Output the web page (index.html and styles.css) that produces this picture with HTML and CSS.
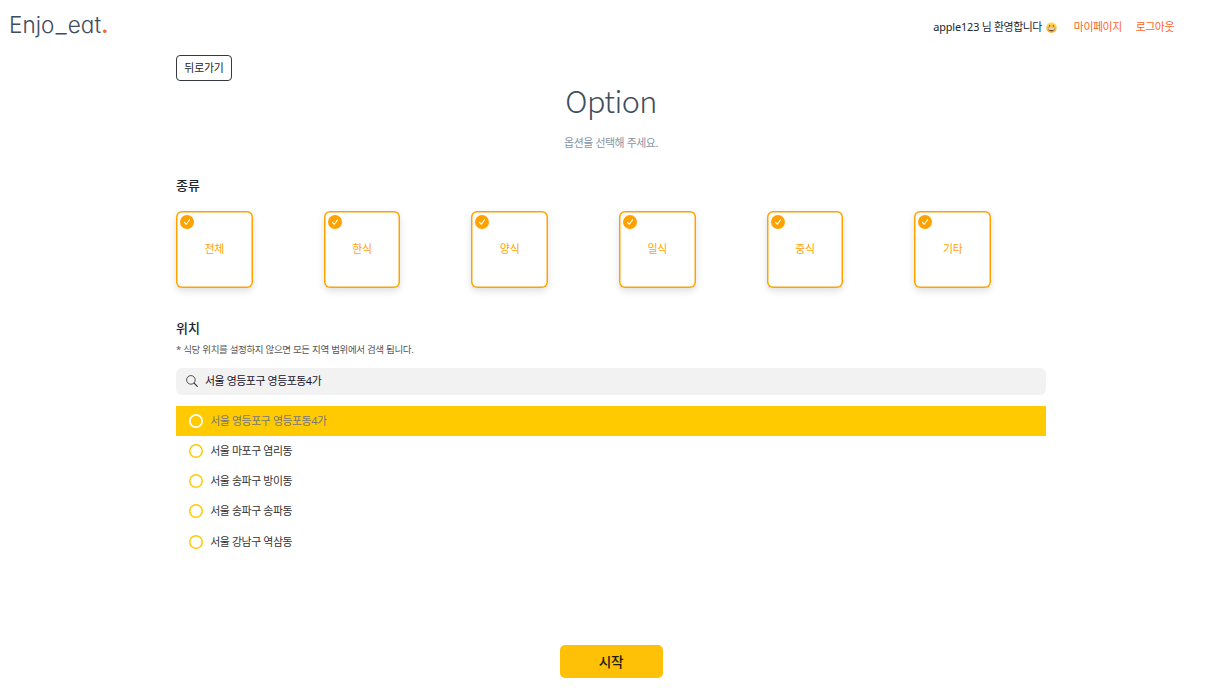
FILE: index.html
```html
<!DOCTYPE html>
<html lang="ko">
<head>
<meta charset="utf-8">
<title>Enjo_eat.</title>
<link rel="stylesheet" href="styles.css">
</head>
<body>
<svg width="0" height="0" class="defs" aria-hidden="true">
  <symbol id="check" viewBox="0 0 14 14"><circle cx="7" cy="7" r="7" fill="#ffa200"/><path d="M4.5 7.4 6.3 9.3 9.5 4.9" fill="none" stroke="#fff" stroke-width="1.05" stroke-linecap="round" stroke-linejoin="round"/></symbol>
</svg>
<header class="header">
  <a class="logo"><span class="logo-text">Enjo<span class="underscore">_</span>eat<span class="dot">.</span></span></a>
  <nav class="nav">
    <span class="welcome"><span class="user">apple123</span> 님 환영합니다</span>
    <svg class="emoji" viewBox="0 0 22 22"><defs><linearGradient id="face" x2="0" y2="1"><stop stop-color="#ffe45c"/><stop offset="1" stop-color="#f5a51c"/></linearGradient></defs><circle cx="11" cy="11" r="10.5" fill="url(#face)"/><ellipse cx="7.4" cy="7.7" rx="1.2" ry="2" fill="#7a5020"/><ellipse cx="14.6" cy="7.7" rx="1.2" ry="2" fill="#7a5020"/><path d="M4 11.5Q11 13 18 11.5 17.2 18.3 11 18.3 4.8 18.3 4 11.5Z" fill="#80461a"/><path d="M4.6 12Q11 13.3 17.4 12L16.3 15Q11 16 5.7 15Z" fill="#fff"/></svg>
    <a class="link mypage">마이페이지</a>
    <a class="link logout">로그아웃</a>
  </nav>
</header>
<main class="main">
  <button class="back">뒤로가기</button>
  <h1 class="title">Option</h1>
  <p class="subtitle">옵션을 선택해 주세요.</p>
  <h2 class="heading">종류</h2>
  <div class="cards">
    <div class="card"><svg class="check"><use href="#check"/></svg>전체</div>
    <div class="card"><svg class="check"><use href="#check"/></svg>한식</div>
    <div class="card"><svg class="check"><use href="#check"/></svg>양식</div>
    <div class="card"><svg class="check"><use href="#check"/></svg>일식</div>
    <div class="card"><svg class="check"><use href="#check"/></svg>중식</div>
    <div class="card"><svg class="check"><use href="#check"/></svg>기타</div>
  </div>
  <h2 class="heading location">위치</h2>
  <p class="note">* 식당 위치를 설정하지 않으면 모든 지역 범위에서 검색 됩니다.</p>
  <div class="search">
    <svg class="search-icon" viewBox="0 0 12 12"><circle cx="4.9" cy="4.9" r="4.3" fill="none" stroke="#333" stroke-width=".85"/><path d="M8.1 8.1 11.3 11.3" stroke="#333" stroke-width="1.2" stroke-linecap="round"/></svg>
    <span>서울 영등포구 영등포동4가</span>
  </div>
  <ul class="list">
    <li class="item selected"><span class="radio"></span><span>서울 영등포구 영등포동4가</span></li>
    <li class="item"><span class="radio"></span><span>서울 마포구 염리동</span></li>
    <li class="item"><span class="radio"></span><span>서울 송파구 방이동</span></li>
    <li class="item"><span class="radio"></span><span>서울 송파구 송파동</span></li>
    <li class="item"><span class="radio"></span><span>서울 강남구 역삼동</span></li>
  </ul>
  <button class="start">시작</button>
</main>
</body>
</html>
```
FILE: styles.css
```css
* { box-sizing: border-box; }
body { margin: 0; height: 688px; overflow: hidden; background: #fff; color: #212529; font: 400 10.9px/16px "Noto Sans", "Noto Sans CJK KR", sans-serif; letter-spacing: -.45px; word-spacing: .2px; }
h1, h2, p, ul { margin: 0; padding: 0; font-weight: 400; }
button { font: inherit; padding: 0; letter-spacing: -.2px; }
.defs { display: block; height: 0; }
.header { display: flex; justify-content: space-between; height: 55px; padding: 7px 46px 0 9px; }
.logo { height: 34px; padding-top: 1px; color: #3d4d5c; }
.logo-text { font: 300 22.5px/34px Inter, sans-serif; font-feature-settings: "cv11"; letter-spacing: .05px; white-space: nowrap; }
.underscore { margin: 0 1px; font-size: 25px; line-height: 1; }
.dot { color: #ff6426; font-weight: 600; }
.nav { display: flex; align-items: center; height: 40px; white-space: nowrap; }
.user { letter-spacing: -.15px; }
.emoji { width: 11px; height: 11px; margin-left: 4px; }
.link { color: #ff6426; }
.mypage { margin-left: 17px; }
.logout { margin-left: 14px; }
.main { display: flex; flex-direction: column; width: 870px; margin-left: 176px; }
.back { width: 56px; height: 26px; border: 1px solid #343a40; border-radius: 4px; background: #fff; color: #212529; }
.title { height: 46px; margin-top: -4px; text-align: center; color: #3d4d5c; font: 300 30.5px/46px "Noto Sans CJK KR", sans-serif; letter-spacing: -.6px; }
.subtitle { margin-top: 12px; text-align: center; color: #8495a8; }
.heading { height: 20px; margin-top: 24px; font-size: 13px; line-height: 20px; font-weight: 500; letter-spacing: 0; }
.cards { display: grid; grid-template-columns: repeat(6, 147.7px); margin-top: 15.5px; }
.card { position: relative; display: flex; align-items: center; justify-content: center; width: 76.6px; height: 77px; border-radius: 6px; color: #ffa200; letter-spacing: -.2px; box-shadow: inset 0 0 0 1.5px #ffa200, 0 3px 7px rgba(0, 0, 0, .13); }
.check { position: absolute; top: 4px; left: 4px; width: 14px; height: 14px; }
.location { margin-top: 30.5px; }
.note { margin-top: 4px; color: #555; font-size: 9.5px; letter-spacing: -.36px; }
.search { display: flex; align-items: center; gap: 7px; height: 27.5px; margin-top: 9.5px; padding-left: 10px; border-radius: 6px; background: #f2f2f2; color: #17122b; }
.search-icon { width: 12px; height: 12px; }
.list { margin-top: 11px; list-style: none; }
.item { display: flex; align-items: center; gap: 7px; height: 30.15px; padding-left: 13.3px; color: #333; }
.selected { background: #ffcb00; color: #777; }
.radio { width: 14px; height: 14px; border-radius: 50%; background: #fff; box-shadow: inset 0 0 0 1.5px #ffcb00; }
.selected .radio { background: transparent; box-shadow: inset 0 0 0 1.7px #fff; }
.start { align-self: center; width: 103px; height: 33px; margin-top: 88.5px; border: 0; border-radius: 5px; background: #ffc107; color: #211a08; font-size: 13.6px; font-weight: 500; }
```
